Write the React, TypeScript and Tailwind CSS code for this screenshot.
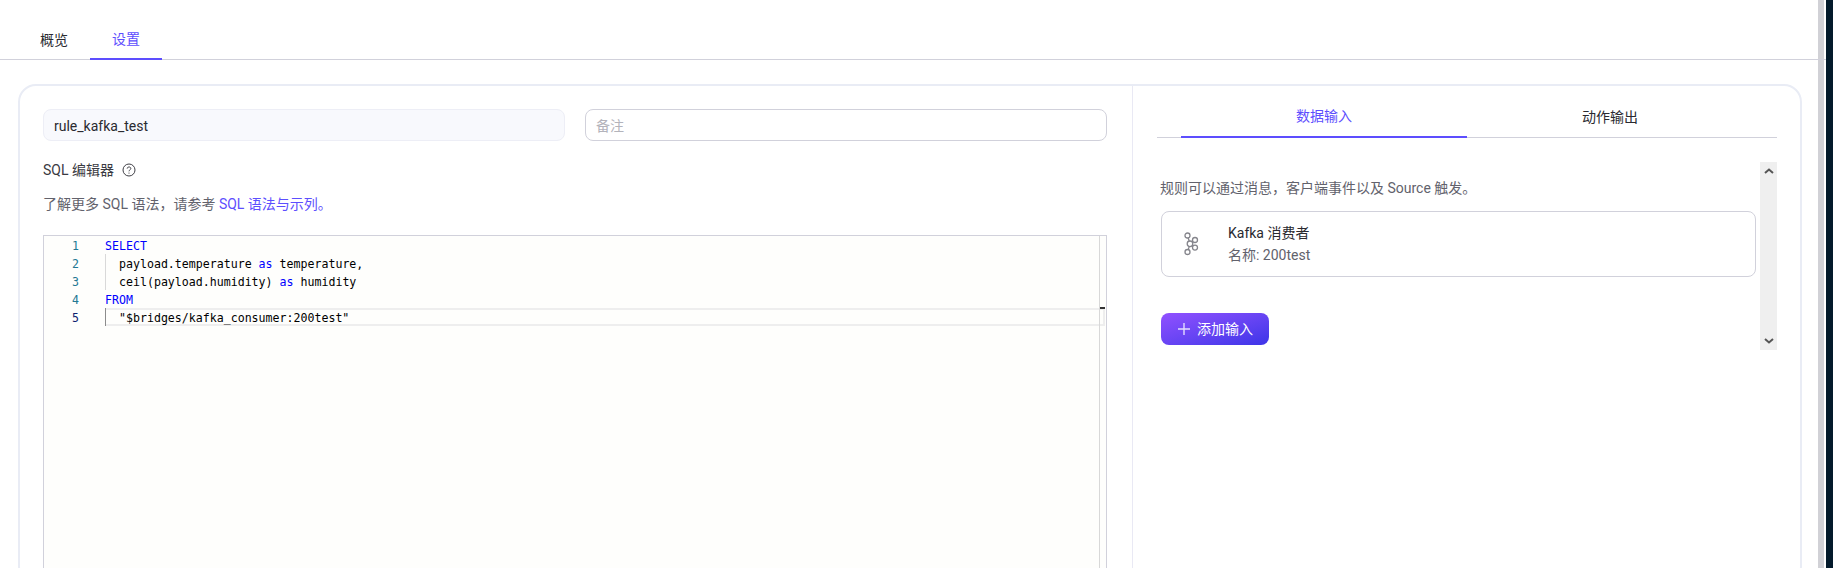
const sans = "font-['Roboto','Noto_Sans_CJK_SC',sans-serif]";

type CodeLine = { no: number; parts: { text: string; keyword?: boolean }[]; indent?: boolean };

const codeLines: CodeLine[] = [
  { no: 1, parts: [{ text: 'SELECT', keyword: true }] },
  { no: 2, indent: true, parts: [{ text: 'payload.temperature ' }, { text: 'as', keyword: true }, { text: ' temperature,' }] },
  { no: 3, indent: true, parts: [{ text: 'ceil(payload.humidity) ' }, { text: 'as', keyword: true }, { text: ' humidity' }] },
  { no: 4, parts: [{ text: 'FROM', keyword: true }] },
];

function KafkaIcon() {
  return (
    <svg width="20" height="24" viewBox="0 0 20 24" fill="none" stroke="#85858c" strokeWidth="1.3">
      <circle cx="6.5" cy="3.5" r="2.5" />
      <circle cx="6.5" cy="20" r="2.5" />
      <circle cx="9" cy="11.8" r="2.8" />
      <circle cx="14" cy="8" r="2.5" />
      <circle cx="14" cy="15.6" r="2.5" />
      <path d="M7.2 6 L8.2 9 M7.2 17.6 L8.2 14.6 M11.2 10.1 L12 9.5 M11.2 13.5 L12 14.1" />
    </svg>
  );
}

function Editor() {
  return (
    <div className="relative mt-[20px] h-[340px] border border-[#d1d1db] bg-[#fefefc] font-['DejaVu_Sans_Mono',monospace] text-[11.6px] leading-[20px] text-black">
      {codeLines.map((line) => (
        <div key={line.no} className="flex h-[18px]">
          <span className="h-[18px] w-[35px] text-right text-[#237893]">{line.no}</span>
          <span className={`ml-[26px] h-[18px] whitespace-pre ${line.indent ? 'border-l border-[#d9d9d9] pl-[13px]' : ''}`}>
            {line.parts.map((part, i) => (
              <span key={i} className={part.keyword ? 'text-[#0000ff]' : ''}>
                {part.text}
              </span>
            ))}
          </span>
        </div>
      ))}
      <div className="flex h-[18px]">
        <span className="h-[18px] w-[35px] text-right text-[#0b216f]">5</span>
        <div className="ml-[26px] mr-[1px] flex flex-1 items-center whitespace-pre border-y-2 border-r-2 border-[#eeeeee]">
          <span className="-my-[2px] h-[18px] border-l border-[#8c8c8c] pl-[13px]">"$bridges/kafka_consumer:200test"</span>
        </div>
      </div>
      {/* overview ruler */}
      <div className="absolute bottom-0 right-0 top-0 w-[7px] border-l border-[#d8d8d8]" />
      <div className="absolute right-[1px] top-[71px] h-[2px] w-[5px] bg-[#333333]" />
    </div>
  );
}

function InputPanel() {
  return (
    <div className="mt-[24px] flex h-[188px] w-[620px]">
      <div className="flex-1 pl-[3px] pr-[4px] pt-[15px]">
        <p className="text-[14px] leading-[22px] text-[#62626c]">规则可以通过消息，客户端事件以及 Source 触发。</p>
        <div className="ml-[1px] mt-[12px] flex h-[66px] items-center gap-[27px] rounded-[8px] border border-[#d1d1db] pl-[19px]">
          <KafkaIcon />
          <div className="text-[14px] leading-[22px]">
            <div className="text-[#2a2a30]">Kafka 消费者</div>
            <div className="text-[#62626c]">名称: 200test</div>
          </div>
        </div>
        <button className="ml-[1px] mt-[36px] flex h-[32px] w-[108px] items-center gap-[6px] rounded-[8px] bg-gradient-to-br from-[#9150ff] to-[#3d34e8] pl-[16px] text-[14px] text-white">
          <svg width="14" height="14" viewBox="0 0 14 14" stroke="#e2dcff" strokeWidth="1.4">
            <path d="M7 1 V13 M1 7 H13" />
          </svg>
          添加输入
        </button>
      </div>
      <div className="flex w-[17px] flex-col items-center justify-between bg-[#efefef] py-[6px]">
        <svg width="10" height="6" viewBox="0 0 10 6" fill="none" stroke="#555555" strokeWidth="2">
          <path d="M1 5 L5 1.5 L9 5" />
        </svg>
        <svg width="10" height="6" viewBox="0 0 10 6" fill="none" stroke="#555555" strokeWidth="2">
          <path d="M1 1 L5 4.5 L9 1" />
        </svg>
      </div>
    </div>
  );
}

export default function App() {
  return (
    <div className={`${sans} relative h-[568px] w-[1833px] overflow-hidden bg-white text-[14px]`}>
      <div className="absolute bottom-0 right-0 top-0 w-[7px] bg-[#031a2b]" />
      <div className="absolute bottom-0 right-[9px] top-0 w-[6px] bg-[#d1d1d6]" />

      <div className="relative w-[1826px]">
        <div className="flex h-[60px] items-end border-b border-[#d1d1db] pl-[18px]">
          <div className="-mb-px flex h-[41px] w-[72px] items-center justify-center pt-[2px] text-[#2a2a30]">概览</div>
          <div className="-mb-px flex h-[41px] w-[72px] items-center justify-center border-b-2 border-[#5d4efe] pt-[2px] text-[#5d4efe]">设置</div>
        </div>

        <div className="ml-[18px] mt-[24px] flex h-[500px] w-[1784px] rounded-[18px] border-2 border-[#e9ecf5] bg-white">
          <div className="w-[1114px] border-r border-[#e9e9f4] pb-0 pl-[23px] pr-[25px] pt-[23px]">
            <div className="flex gap-[20px]">
              <div className="flex h-[32px] w-[522px] items-center rounded-[8px] border border-[#edeef6] bg-[#f8f9fd] px-[10px] pt-[2px] text-[#2a2a30]">rule_kafka_test</div>
              <div className="flex h-[32px] w-[522px] items-center rounded-[8px] border border-[#d1d1db] px-[10px] pt-[2px] text-[#b3b3bb]">备注</div>
            </div>
            <div className="mt-[18px] flex h-[22px] items-center gap-[8px] text-[#3a3a42]">
              SQL 编辑器
              <svg width="14" height="14" viewBox="0 0 14 14" fill="none" stroke="#3f3f46" strokeWidth="1">
                <circle cx="7" cy="7" r="6" />
                <path d="M5.2 5.6 C5.2 3.4 8.8 3.4 8.8 5.5 C8.8 6.9 7 6.8 7 8.3" />
                <path d="M7 9.6 V10.6" />
              </svg>
            </div>
            <p className="mt-[12px] leading-[22px] text-[#62626c]">
              了解更多 SQL 语法，请参考 <span className="text-[#5d4efe]">SQL 语法与示列。</span>
            </p>
            <Editor />
          </div>

          <div className="flex-1 pl-[24px] pr-[24px] pt-[11px]">
            <div className="flex h-[41px] w-[620px] justify-center border-b border-[#d1d1db]">
              <div className="-mb-px flex w-[286px] items-center justify-center border-b-2 border-[#5d4efe] pb-[1px] text-[#5d4efe]">数据输入</div>
              <div className="-mb-px flex w-[286px] items-center justify-center text-[#2a2a30]">动作输出</div>
            </div>
            <InputPanel />
          </div>
        </div>
      </div>
    </div>
  );
}
